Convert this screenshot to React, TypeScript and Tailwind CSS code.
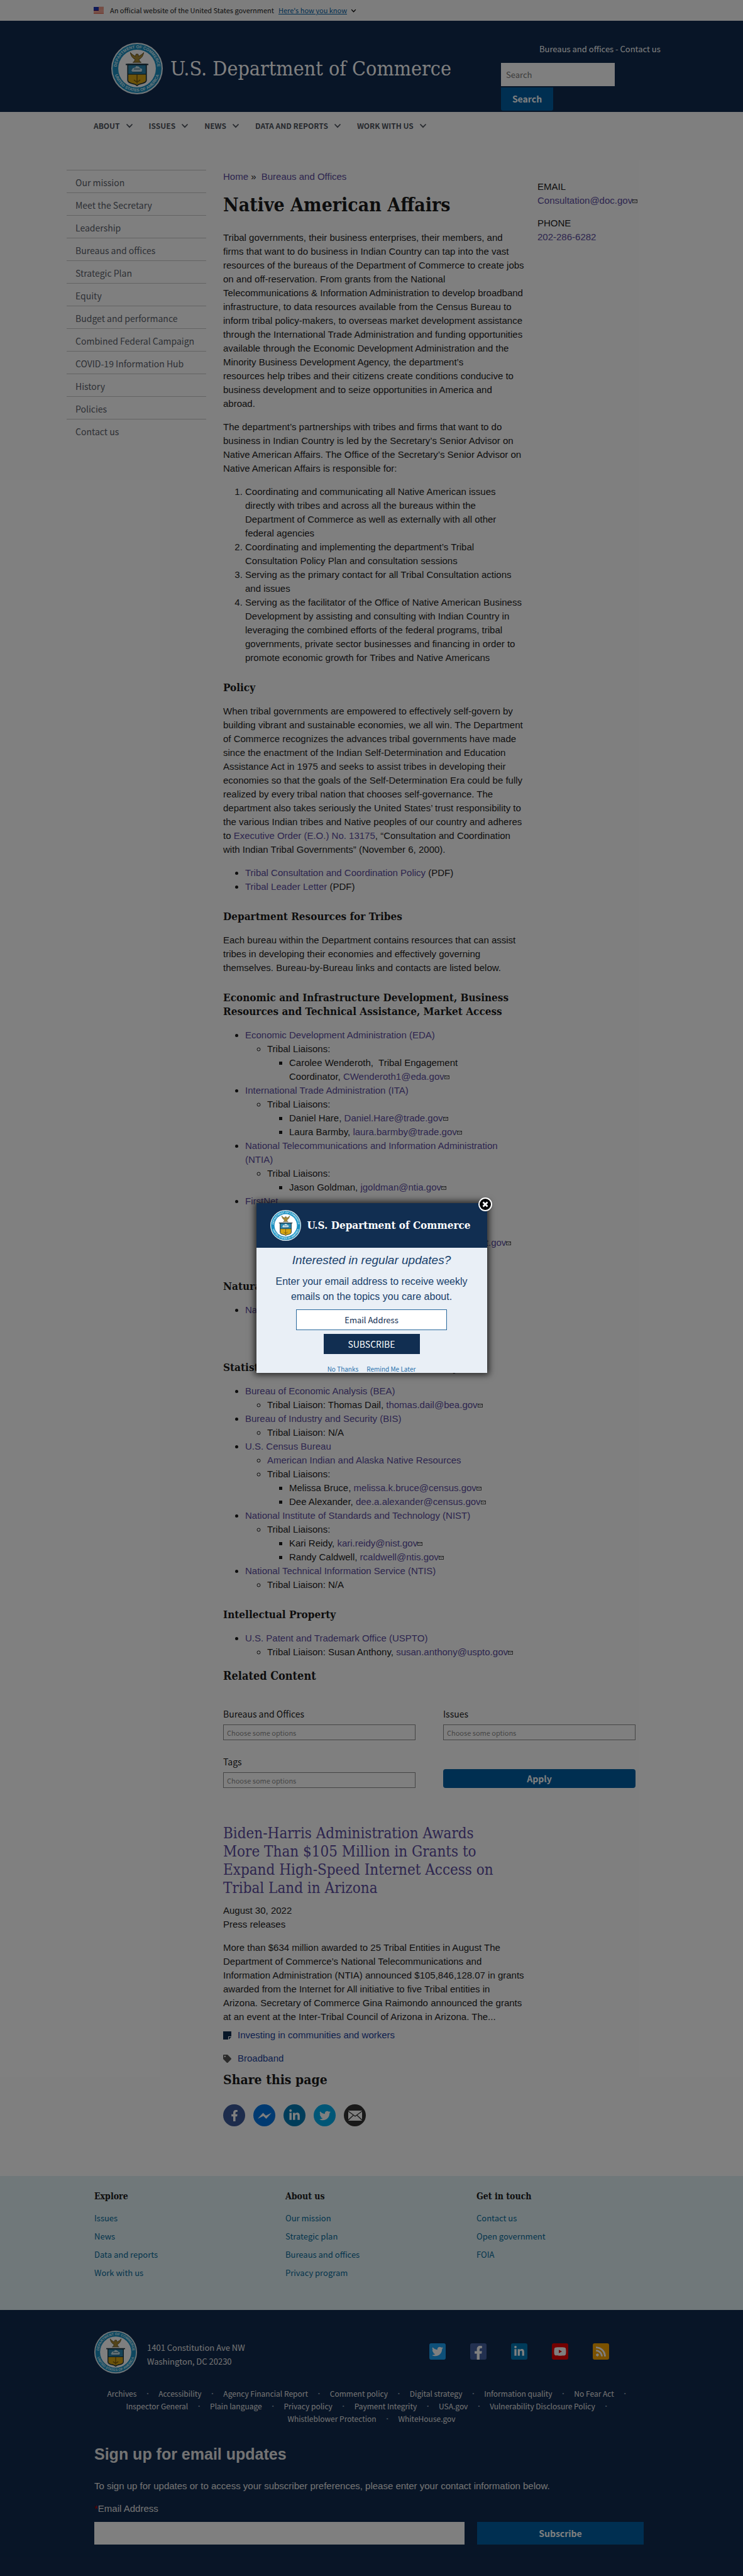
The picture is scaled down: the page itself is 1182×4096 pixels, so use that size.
import { useId, type ReactNode } from "react";
import { FaFacebookF, FaLinkedinIn, FaTwitter, FaYoutube, FaRss, FaTag } from "react-icons/fa";

const SERIF = "font-['DejaVu_Serif_Condensed','DejaVu_Serif',serif]";
const SANS = "font-['Noto_Sans_CJK_SC',sans-serif]";
const BODY = "font-['Liberation_Sans',sans-serif]";

function Seal({ className }: { className: string }) {
  const id = useId();
  return (
    <svg viewBox="0 0 100 100" className={className} role="img" aria-label="Department of Commerce seal">
      <defs>
        <path id={`${id}t`} d="M 10.5 50 A 39.5 39.5 0 0 1 89.5 50" />
        <path id={`${id}b`} d="M 5.5 50 A 44.5 44.5 0 0 0 94.5 50" />
      </defs>
      <circle cx="50" cy="50" r="50" fill="#e4eef2" />
      <circle cx="50" cy="50" r="47.5" fill="#1a8fc0" />
      <circle cx="50" cy="50" r="36.5" fill="#ffffff" />
      <text fontSize="8" fontWeight="700" fill="#d6eef8" fontFamily="Liberation Sans" textAnchor="middle">
        <textPath href={`#${id}t`} startOffset="50%">DEPARTMENT OF COMMERCE</textPath>
      </text>
      <text fontSize="8" fontWeight="700" fill="#d6eef8" fontFamily="Liberation Sans" textAnchor="middle">
        <textPath href={`#${id}b`} startOffset="50%">UNITED STATES OF AMERICA</textPath>
      </text>
      <path d="M37 19 C38 25 41 30 46 32 L45 36 L42 38 L58 38 L55 36 L54 32 C59 30 62 25 63 19 C59 23 56 25 53 26 L52 22 L48 22 L47 26 C44 25 41 23 37 19 Z" fill="#a88a34" stroke="#4d3f17" strokeWidth="1" />
      <path d="M32 42 H68 V73 C68 76 64 78 60 79 C55 80 52 81 50 83 C48 81 45 80 40 79 C36 78 32 76 32 73 Z" fill="#d8a614" />
      <path d="M32 42 H68 V61 H32 Z" fill="#2a85ad" />
      <path d="M39 54 L42 49 L47 48 L48 45 L53 46 L56 49 L60 51 L59 56 L42 57 Z" fill="#c9e2ec" />
      <path d="M41 57 H60 M44 51 H56" stroke="#17465c" strokeWidth="1.2" />
      <path d="M50 62 V79 M44 72 Q50 79 56 72" stroke="#7b5c10" strokeWidth="2" fill="none" />
      <path d="M32 61 H68" stroke="#17303c" strokeWidth="1.5" />
      <path d="M32 42 H68 V73 C68 76 64 78 60 79 C55 80 52 81 50 83 C48 81 45 80 40 79 C36 78 32 76 32 73 Z" fill="none" stroke="#17303c" strokeWidth="2" />
      <path d="M28 42 H72" stroke="#17303c" strokeWidth="2.5" />
    </svg>
  );
}

function Chevron({ className }: { className: string }) {
  return (
    <svg viewBox="0 0 12 8" className={className} fill="none" stroke="currentColor" strokeWidth="1.8" aria-hidden="true">
      <path d="M1.5 1.5 L6 6.2 L10.5 1.5" />
    </svg>
  );
}

function Flag() {
  return (
    <svg viewBox="0 0 16 11" className="h-[11px] w-4 shrink-0" aria-hidden="true">
      <rect width="16" height="11" fill="#fff" />
      {[0, 2, 4, 6, 8, 10].map((y) => (
        <rect key={y} y={y} width="16" height="1" fill="#db3e1f" />
      ))}
      <rect width="8" height="6" fill="#1e33b1" />
    </svg>
  );
}

function A({ children }: { children: ReactNode }) {
  return (
    <a href="#" className="text-[#5b4b9e]">
      {children}
    </a>
  );
}

function Mail({ to }: { to: string }) {
  return (
    <a href={`mailto:${to}`} className="text-[#5b4b9e]">
      {to}
      <svg viewBox="0 0 16 12" className="mb-px inline h-[6px] w-2 align-baseline" aria-hidden="true">
        <rect x="1" y="1" width="14" height="10" fill="none" stroke="#555" strokeWidth="2" />
        <path d="M1 1 L8 7 L15 1" fill="none" stroke="#555" strokeWidth="1.5" />
      </svg>
    </a>
  );
}

function H3({ children }: { children: ReactNode }) {
  return <h3 className={`${SERIF} mt-[25px] mb-4 text-[17px] leading-[22px] font-bold`}>{children}</h3>;
}

function Ul1({ children }: { children: ReactNode }) {
  return <ul className="list-disc pl-[35px]">{children}</ul>;
}
function Ul2({ children }: { children: ReactNode }) {
  return <ul className="list-[circle] pl-[35px]">{children}</ul>;
}
function Ul3({ children }: { children: ReactNode }) {
  return <ul className="list-[square] pl-[35px]">{children}</ul>;
}

function ChooseField({ id, label }: { id: string; label: string }) {
  return (
    <div>
      <label htmlFor={id} className={`${SANS} block text-[14px] leading-[20px]`}>
        {label}
      </label>
      <input
        id={id}
        placeholder="Choose some options"
        className={`${SANS} mt-[7px] block h-[25px] w-full border border-[#8a8a8a] bg-white px-[5px] text-[11px] placeholder:text-[#8c8c8c]`}
      />
    </div>
  );
}

const sideLinks = ["Our mission", "Meet the Secretary", "Leadership", "Bureaus and offices", "Strategic Plan", "Equity", "Budget and performance", "Combined Federal Campaign", "COVID-19 Information Hub", "History", "Policies", "Contact us"];
const navLinks = ["ABOUT", "ISSUES", "NEWS", "DATA AND REPORTS", "WORK WITH US"];
const footerCols = [
  { title: "Explore", links: ["Issues", "News", "Data and reports", "Work with us"] },
  { title: "About us", links: ["Our mission", "Strategic plan", "Bureaus and offices", "Privacy program"] },
  { title: "Get in touch", links: ["Contact us", "Open government", "FOIA"] },
];
const legalRows = [
  ["Archives", "Accessibility", "Agency Financial Report", "Comment policy", "Digital strategy", "Information quality", "No Fear Act"],
  ["Inspector General", "Plain language", "Privacy policy", "Payment Integrity", "USA.gov", "Vulnerability Disclosure Policy"],
  ["Whistleblower Protection", "WhiteHouse.gov"],
];

function Header() {
  return (
    <header>
      <div className="bg-[#fafafa]">
        <div className={`${SANS} mx-auto flex h-[33px] w-full max-w-[884px] items-center text-[11px]`}>
          <Flag />
          <span className="ml-[10px]">An official website of the United States government</span>
          <button className="ml-[7px] flex items-center gap-[6px] text-[#005ea2]">
            <span className="underline">Here's how you know</span>
            <Chevron className="h-[6px] w-[9px] text-black" />
          </button>
        </div>
      </div>
      <div className="bg-[#112a4e]">
        <div className="mx-auto flex h-[145px] w-full max-w-[884px] justify-between pl-7">
          <a href="#" className="mt-[35px] flex h-[82px] items-center gap-3">
            <Seal className="size-[82px]" />
            <span className={`${SERIF} text-[32px] leading-10 text-white`}>U.S. Department of Commerce</span>
          </a>
          <div className="mt-9 w-[236px]">
            <p className={`${SANS} pl-[61px] text-[13px] leading-[18px] whitespace-nowrap text-white`}>
              <a href="#">Bureaus and offices</a> - <a href="#">Contact us</a>
            </p>
            <form className={`${SANS} mt-[13px]`}>
              <input aria-label="Search" placeholder="Search" className="block h-[37px] w-[181px] bg-white px-2 text-[13px] placeholder:text-[#757575]" />
              <button type="button" className="mt-[2px] block h-[37px] w-[83px] rounded-b-[3px] bg-[#005ea2] text-[14px] font-bold text-white">
                Search
              </button>
            </form>
          </div>
        </div>
      </div>
      <nav className={`${SANS} mx-auto flex h-[44px] w-full max-w-[884px] items-center gap-[25px] text-[12px] font-bold text-[#4d535c]`}>
        {navLinks.map((n) => (
          <button key={n} className="flex items-center gap-[9px]">
            {n}
            <Chevron className="h-2 w-3" />
          </button>
        ))}
      </nav>
    </header>
  );
}

function Article() {
  return (
    <article className="w-[481px]">
      <nav className="text-[15px] leading-[22px]">
        <A>Home</A> <span className="mr-1">»</span> <A>Bureaus and Offices</A>
      </nav>
      <h1 className={`${SERIF} mt-[14px] text-[30px] leading-10 font-bold`}>Native American Affairs</h1>
      <div className="mt-[21px] text-[15px] leading-[22px]">
        <p>
          Tribal governments, their business enterprises, their members, and firms that want to do business in Indian Country can tap into the vast resources of the bureaus of the Department of Commerce to create jobs on and off-reservation. From grants from the National Telecommunications &amp; Information Administration to develop broadband infrastructure, to data resources available from the Census Bureau to inform tribal policy-makers, to overseas market development assistance through the International Trade Administration and funding opportunities available through the Economic Development Administration and the Minority Business Development Agency, the department’s resources&nbsp;help tribes and their citizens create conditions conducive to business development and to seize opportunities in America and abroad.
        </p>
        <p className="mt-[15px]">
          The department’s partnerships with tribes and firms that want to do business in Indian Country is led by the Secretary’s Senior Advisor on Native American Affairs. The Office of the Secretary’s Senior Advisor on Native American Affairs is responsible for:
        </p>
        <ol className="mt-[15px] list-decimal pl-[35px]">
          <li>Coordinating and communicating all Native American issues directly with tribes and across all the bureaus within the Department of Commerce as well as externally with all other federal agencies</li>
          <li>Coordinating and implementing the department’s Tribal Consultation Policy Plan and consultation sessions</li>
          <li>Serving as the primary contact for all Tribal Consultation actions and issues</li>
          <li>Serving as the facilitator of the Office of Native American Business Development by assisting and consulting with Indian Country in leveraging the combined efforts of the federal programs, tribal governments, private sector businesses and financing in order to promote economic growth for Tribes and Native Americans</li>
        </ol>
        <H3>Policy</H3>
        <p>
          When tribal governments are empowered to effectively self-govern by building vibrant and sustainable economies, we all win. The Department of Commerce recognizes the advances tribal governments have made since the enactment of the Indian Self-Determination and Education Assistance Act in 1975 and seeks to assist tribes in developing their economies so that the goals of the Self-Determination Era could be fully realized by every tribal nation that chooses self-governance. The department also takes seriously the United States’ trust responsibility to the various Indian tribes and Native peoples of our country and adheres to <A>Executive Order (E.O.) No. 13175</A>, “Consultation and Coordination with Indian Tribal Governments” (November 6, 2000).
        </p>
        <div className="mt-[15px]">
          <Ul1>
            <li><A>Tribal Consultation and Coordination Policy</A> (PDF)</li>
            <li><A>Tribal Leader Letter</A> (PDF)</li>
          </Ul1>
        </div>
        <H3>Department Resources for Tribes</H3>
        <p>Each bureau within the Department contains resources that can assist tribes in developing their economies and effectively governing themselves. Bureau-by-Bureau links and contacts are listed below.</p>
        <H3>Economic and Infrastructure Development, Business Resources and Technical Assistance, Market Access</H3>
        <Ul1>
          <li>
            <A>Economic Development Administration (EDA)</A>
            <Ul2>
              <li>
                Tribal Liaisons:
                <Ul3>
                  <li>Carolee Wenderoth,&nbsp; Tribal Engagement Coordinator,&nbsp;<Mail to="CWenderoth1@eda.gov" /></li>
                </Ul3>
              </li>
            </Ul2>
          </li>
          <li>
            <A>International Trade Administration (ITA)</A>
            <Ul2>
              <li>
                Tribal Liaisons:
                <Ul3>
                  <li>Daniel Hare, <Mail to="Daniel.Hare@trade.gov" /></li>
                  <li>Laura Barmby, <Mail to="laura.barmby@trade.gov" /></li>
                </Ul3>
              </li>
            </Ul2>
          </li>
          <li>
            <A>National Telecommunications and Information Administration (NTIA)</A>
            <Ul2>
              <li>
                Tribal Liaisons:
                <Ul3>
                  <li>Jason Goldman, <Mail to="jgoldman@ntia.gov" /></li>
                </Ul3>
              </li>
            </Ul2>
          </li>
          <li>
            <A>FirstNet</A>
            <Ul2>
              <li>
                Tribal Liaisons:
                <Ul3>
                  <li>Adam Geisler</li>
                  <li>Margaret Gutierrez, <Mail to="margaret.gutierrez@firstnet.gov" /></li>
                  <li>Tribal Engagement</li>
                </Ul3>
              </li>
            </Ul2>
          </li>
        </Ul1>
        <H3>Natural Resources</H3>
        <Ul1>
          <li>
            <A>National Oceanic and Atmospheric Administration</A>
            <Ul2>
              <li>Tribal Liaison</li>
              <li>Tribal Resources</li>
            </Ul2>
          </li>
        </Ul1>
        <H3>Statistics, Standards, Information, Security</H3>
        <Ul1>
          <li>
            <A>Bureau of Economic Analysis (BEA)</A>
            <Ul2>
              <li>Tribal Liaison: Thomas Dail, <Mail to="thomas.dail@bea.gov" /></li>
            </Ul2>
          </li>
          <li>
            <A>Bureau of Industry and Security (BIS)</A>
            <Ul2>
              <li>Tribal Liaison: N/A</li>
            </Ul2>
          </li>
          <li>
            <A>U.S. Census Bureau</A>
            <Ul2>
              <li><A>American Indian and Alaska Native Resources</A></li>
              <li>
                Tribal Liaisons:
                <Ul3>
                  <li>Melissa Bruce, <Mail to="melissa.k.bruce@census.gov" /></li>
                  <li>Dee Alexander, <Mail to="dee.a.alexander@census.gov" /></li>
                </Ul3>
              </li>
            </Ul2>
          </li>
          <li>
            <A>National Institute of Standards and Technology (NIST)</A>
            <Ul2>
              <li>
                Tribal Liaisons:
                <Ul3>
                  <li>Kari Reidy, <Mail to="kari.reidy@nist.gov" /></li>
                  <li>Randy Caldwell, <Mail to="rcaldwell@ntis.gov" /></li>
                </Ul3>
              </li>
            </Ul2>
          </li>
          <li>
            <A>National Technical Information Service (NTIS)</A>
            <Ul2>
              <li>Tribal Liaison: N/A</li>
            </Ul2>
          </li>
        </Ul1>
        <H3>Intellectual Property</H3>
        <Ul1>
          <li>
            <A>U.S. Patent and Trademark Office (USPTO)</A>
            <Ul2>
              <li>Tribal Liaison: Susan Anthony, <Mail to="susan.anthony@uspto.gov" /></li>
            </Ul2>
          </li>
        </Ul1>
      </div>
    </article>
  );
}

function Related() {
  return (
    <section>
      <h2 className={`${SERIF} mt-[15px] text-[18px] leading-6 font-bold`}>Related Content</h2>
      <form className="mt-[38px] grid max-w-[656px] grid-cols-2 gap-x-[44px] gap-y-6">
        <ChooseField id="bureaus" label="Bureaus and Offices" />
        <ChooseField id="issues" label="Issues" />
        <ChooseField id="tags" label="Tags" />
        <button type="button" className={`${SANS} h-[30px] self-end rounded-[4px] bg-[#005ea2] text-[14px] font-bold text-white`}>
          Apply
        </button>
      </form>
      <div className="w-[481px] text-[15px] leading-[22px]">
        <h2 className={`${SERIF} mt-[58px] max-w-[440px] text-[24px] leading-[29px]`}>
          <A>Biden-Harris Administration Awards More Than $105 Million in Grants to Expand High-Speed Internet Access on Tribal Land in Arizona</A>
        </h2>
        <p className="mt-[10px]">August 30, 2022</p>
        <p>Press releases</p>
        <p className="mt-[15px]">
          More than $634 million awarded to 25 Tribal Entities in August The Department of Commerce’s National Telecommunications and Information Administration (NTIA) announced $105,846,128.07 in grants awarded from the Internet for All initiative to five Tribal entities in Arizona. Secretary of Commerce Gina Raimondo announced the grants at an event at the Inter-Tribal Council of Arizona in Arizona. The...
        </p>
        <p className="mt-[7px] flex items-center gap-[10px] text-[#1b3f9c]">
          <svg viewBox="0 0 13 13" className="size-[13px]" aria-hidden="true">
            <path d="M0 0 H13 V8 H8 V13 H0 Z" fill="#112e51" />
            <path d="M9 13 V9 H13 Z" fill="#112e51" />
          </svg>
          <a href="#">Investing in communities and workers</a>
        </p>
        <p className="mt-[15px] flex items-center gap-[10px] text-[#1b3f9c]">
          <FaTag className="size-[13px] text-[#555]" />
          <a href="#">Broadband</a>
        </p>
      </div>
      <h2 className={`${SERIF} mt-[9px] text-[21px] leading-7 font-bold`}>Share this page</h2>
      <div className="mt-[25px] flex gap-[13px] text-white">
        <a href="#" aria-label="Facebook" className="flex size-[35px] items-center justify-center rounded-full bg-[#3b5998]"><FaFacebookF className="size-[18px]" /></a>
        <a href="#" aria-label="Messenger" className="flex size-[35px] items-center justify-center rounded-full bg-[#0075e3]">
          <svg viewBox="0 0 24 12" className="w-[24px]" fill="currentColor" aria-hidden="true"><path d="M1 11 L9.5 1.5 L14 6 L23 1.5 L14.5 11 L10 6.5 Z" /></svg>
        </a>
        <a href="#" aria-label="LinkedIn" className="flex size-[35px] items-center justify-center rounded-full bg-[#007bb5]"><FaLinkedinIn className="size-[19px]" /></a>
        <a href="#" aria-label="Twitter" className="flex size-[35px] items-center justify-center rounded-full bg-[#00aced]"><FaTwitter className="size-[18px]" /></a>
        <a href="#" aria-label="Email" className="flex size-[35px] items-center justify-center rounded-full bg-[#333]">
          <svg viewBox="0 0 22 16" className="h-4 w-[22px]" aria-hidden="true">
            <rect width="22" height="16" rx="1" fill="#fff" />
            <path d="M0 1 L11 9 L22 1 M0 15 L8 7.5 M22 15 L14 7.5" fill="none" stroke="#333" strokeWidth="1.4" />
          </svg>
        </a>
      </div>
    </section>
  );
}

function Dot() {
  return <span className={`${BODY} text-[8px] text-[#8fa0b5]`}>•</span>;
}

function Footer() {
  return (
    <footer className={`${SANS} flex grow flex-col`}>
      <div className="bg-[#e1f0f5]">
        <div className="mx-auto grid h-[213px] w-full max-w-[882px] grid-cols-[304px_304px_1fr] pt-5">
          {footerCols.map((c) => (
            <div key={c.title}>
              <h3 className={`${SERIF} text-[14px] leading-6 font-bold`}>{c.title}</h3>
              <ul className="mt-2 text-[13px] leading-[29px]">
                {c.links.map((l) => (
                  <li key={l}><a href="#" className="text-[#046b99]">{l}</a></li>
                ))}
              </ul>
            </div>
          ))}
        </div>
      </div>
      <div className="grow bg-[#112a4e] text-[#e6e6e6]">
        <div className="mx-auto w-full max-w-[882px] pt-[33px]">
          <div className="flex items-center">
            <Seal className="size-[68px]" />
            <address className="ml-4 w-[449px] pt-2 text-[13px] leading-[22px] not-italic">
              1401 Constitution Ave NW<br />Washington, DC 20230
            </address>
            <div className="flex gap-[39px] pb-[2px] text-white">
              <a href="#" aria-label="Twitter" className="flex size-[26px] items-center justify-center rounded-[3px] bg-[#1da1f2]"><FaTwitter className="size-[18px]" /></a>
              <a href="#" aria-label="Facebook" className="flex size-[26px] items-end justify-center rounded-[3px] bg-[#4460a0]"><FaFacebookF className="size-[22px]" /></a>
              <a href="#" aria-label="LinkedIn" className="flex size-[26px] items-center justify-center rounded-[3px] bg-[#0077b5]"><FaLinkedinIn className="size-[18px]" /></a>
              <a href="#" aria-label="YouTube" className="flex size-[26px] items-center justify-center rounded-[3px] bg-[#e60000]"><FaYoutube className="size-[20px]" /></a>
              <a href="#" aria-label="RSS" className="flex size-[26px] items-center justify-center rounded-[3px] bg-[#f7a400]"><FaRss className="size-[18px]" /></a>
            </div>
          </div>
          <div className="mt-[22px] text-[12px] leading-5">
            {legalRows.map((row, r) => (
              <ul key={r} className="flex justify-center gap-4">
                {row.map((l, i) => (
                  <li key={l} className="flex gap-4 whitespace-nowrap">
                    <a href="#">{l}</a>
                    {(i < row.length - 1 || r < 2) && <Dot />}
                  </li>
                ))}
                {r < 2 && <li aria-hidden="true" />}
              </ul>
            ))}
          </div>
          <form className={BODY}>
            <h2 className="mt-[30px] text-[25px] leading-8 font-bold">Sign up for email updates</h2>
            <p className="mt-6 text-[15px] leading-[22px]">To sign up for updates or to access your subscriber preferences, please enter your contact information below.</p>
            <label htmlFor="email" className="mt-[14px] block text-[15px] leading-[22px]">
              <span className="text-[#b00]">*</span>Email Address
            </label>
            <div className="mt-[10px] flex gap-5 pr-2">
              <input id="email" type="email" className="h-9 min-w-0 grow bg-white px-2 text-black" />
              <button type="button" className={`${SANS} h-9 w-[265px] bg-[#005ea2] text-[14px] font-bold text-white`}>Subscribe</button>
            </div>
          </form>
        </div>
      </div>
    </footer>
  );
}

function UpdatesDialog() {
  return (
    <div className="absolute inset-0 flex items-center justify-center bg-black/50">
      <div role="dialog" aria-label="Interested in regular updates?" className="relative w-[367px] bg-[#e9eff6] text-center text-[#19416b] shadow-[0_0_10px_3px_rgba(0,0,0,0.7)]">
        <div className="flex h-[71px] items-center gap-[10px] bg-[#112e51] pl-[22px]">
          <Seal className="size-[49px]" />
          <span className={`${SERIF} text-[17px] font-bold whitespace-nowrap text-white`}>U.S. Department of Commerce</span>
        </div>
        <div className="flex flex-col items-center">
          <h2 className="mt-2 text-[19px] leading-6 italic">Interested in regular updates?</h2>
          <p className="mt-[10px] w-[320px] text-[16px] leading-6">Enter your email address to receive weekly emails on the topics you care about.</p>
          <input aria-label="Email Address" placeholder="Email Address" className={`${SANS} mt-2 h-[33px] w-[240px] border border-[#2a6a9e] bg-white text-center text-[13px] placeholder:text-[#112e51]`} />
          <button className={`${SANS} mt-[6px] h-8 w-[153px] bg-[#112e51] text-[14px] text-white`}>SUBSCRIBE</button>
          <div className={`${SANS} mt-[18px] flex gap-[13px] text-[10px] leading-3 text-[#2a72ad]`}>
            <button>No Thanks</button>
            <button>Remind Me Later</button>
          </div>
        </div>
        <button aria-label="Close" className="absolute -top-[9px] -right-2 flex size-[22px] items-center justify-center rounded-full border-2 border-white bg-black shadow">
          <svg viewBox="0 0 10 10" className="size-[10px]" stroke="#fff" strokeWidth="2.8" aria-hidden="true"><path d="M1.5 1.5 L8.5 8.5 M8.5 1.5 L1.5 8.5" /></svg>
        </button>
      </div>
    </div>
  );
}

export default function App() {
  return (
    <div className={`${BODY} relative flex min-h-screen flex-col bg-white text-[#1b1b1b]`}>
      <Header />
      <main className="mx-auto flex w-full max-w-[970px] gap-[27px] pt-[48px] pb-[79px]">
        <aside className={`${SANS} w-[222px] shrink-0`}>
          <ul>
            {sideLinks.map((l) => (
              <li key={l} className="h-9 border-t border-[#c6c6c6] pl-[14px] text-[14px] leading-[38px] text-[#5b616b]">
                <a href="#">{l}</a>
              </li>
            ))}
          </ul>
        </aside>
        <div className="grow">
          <div className="flex gap-[19px]">
            <Article />
            <aside className="pt-4 text-[15px] leading-[22px]">
              <h2>EMAIL</h2>
              <Mail to="Consultation@doc.gov" />
              <h2 className="mt-[14px]">PHONE</h2>
              <A>202-286-6282</A>
            </aside>
          </div>
          <Related />
        </div>
      </main>
      <Footer />
      <UpdatesDialog />
    </div>
  );
}
